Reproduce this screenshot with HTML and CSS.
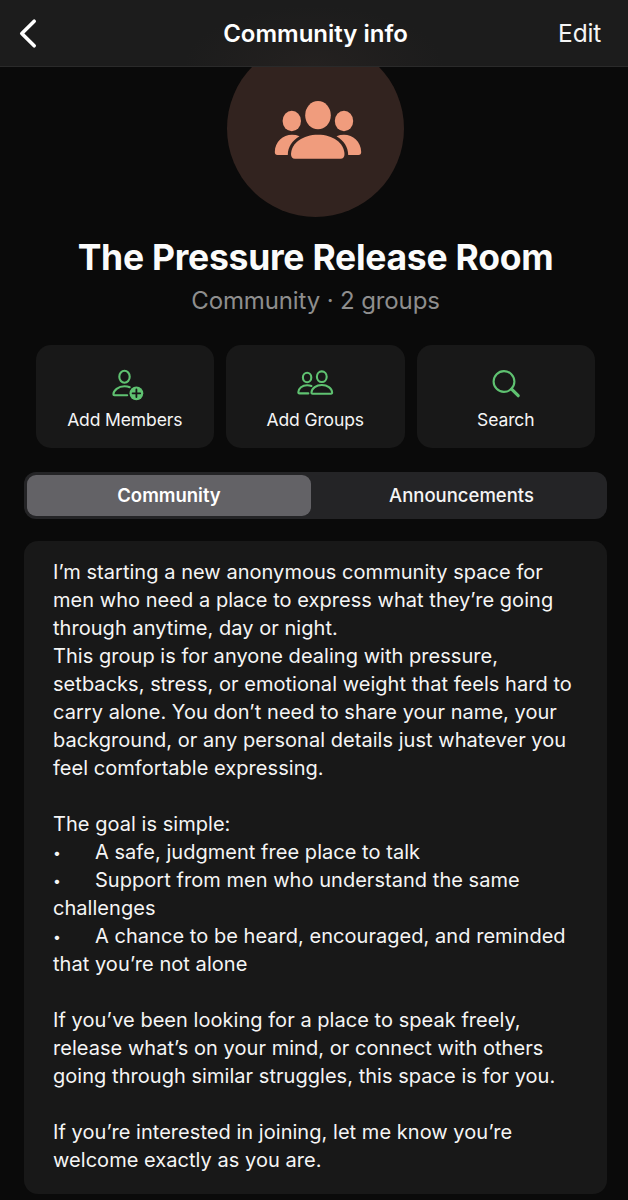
FILE: index.html
```html
<!DOCTYPE html>
<html lang="en">
<head>
  <meta charset="UTF-8" />
  <meta name="viewport" content="width=device-width, initial-scale=1.0"/>
  <title>Community info</title>
  <link rel="stylesheet" href="styles.css">
</head>
<body>

  <header class="navbar">
    <button class="back" aria-label="Back">
      <svg width="20" height="32" viewBox="0 0 20 32"><path d="M17.2 4.2 L4.8 16.5 L17.2 28.8" /></svg>
    </button>
    <h1 class="nav-title">Community info</h1>
    <button class="edit">Edit</button>
  </header>

  <main>
    <section class="profile">
      <div class="avatar">
        <svg width="88" height="58" viewBox="0 0 88 58">
          <ellipse cx="44" cy="14.2" rx="12.8" ry="14.1" />
          <ellipse cx="17.8" cy="20" rx="9.2" ry="10.2" />
          <ellipse cx="70" cy="20" rx="9.2" ry="10.2" />
          <path d="M21 57.7 Q17 57.7 17 53 C17.5 42 29 33.8 44 33.8 C59 33.8 70 42 70.5 53 Q70.5 57.7 66.5 57.7 Z" />
          <path d="M13.8 54 H3.5 Q0.8 54 0.8 51 C1 41 9 33.8 18 33.8 Q22 33.8 25.5 35.2 C18 39.5 14 46 13.8 54 Z" />
          <path d="M74.2 54 H84.5 Q87.2 54 87.2 51 C87 41 79 33.8 70 33.8 Q66 33.8 62.5 35.2 C70 39.5 74 46 74.2 54 Z" />
        </svg>
      </div>
      <h2 class="name">The Pressure Release Room</h2>
      <p class="meta">Community · 2 groups</p>
    </section>

    <section class="actions">
      <button class="action">
        <svg width="34" height="34" viewBox="-3.2 -1.3 34 34">
          <ellipse cx="13.3" cy="8.5" rx="5.2" ry="6" />
          <path d="M18.5 18.9 Q16.3 18 13.3 18 C7 18 2.3 22 2.2 26 Q2.2 27 3.2 27 H16" />
          <circle class="solid" cx="25.2" cy="25" r="6.9" />
          <path class="plus" d="M25.2 21.2 V28.8 M21.4 25 H29" />
        </svg>
        <span>Add Members</span>
      </button>
      <button class="action">
        <svg width="38" height="34" viewBox="0.2 -1 38 34">
          <ellipse cx="11.3" cy="9.5" rx="4.2" ry="4.7" />
          <ellipse cx="26" cy="8.7" rx="4.9" ry="5.3" />
          <path d="M15.6 18 Q13.8 17.2 11.3 17.2 C6.5 17.2 2.6 20.2 2.5 24.2 Q2.5 25.4 3.7 25.4 H12.5" />
          <path d="M16.8 25.7 Q15.6 25.7 15.7 24.3 C16 20 20.5 17 26 17 C31.5 17 36 20 36.3 24.3 Q36.4 25.7 35.2 25.7 Z" />
        </svg>
        <span>Add Groups</span>
      </button>
      <button class="action">
        <svg width="34" height="34" viewBox="0 -0.5 34 34">
          <circle cx="15" cy="14" r="10.4" />
          <path class="handle" d="M22.6 21.7 L29.2 28.2" />
        </svg>
        <span>Search</span>
      </button>
    </section>

    <nav class="tabs">
      <button class="tab active">Community</button>
      <button class="tab">Announcements</button>
    </nav>

    <section class="description">
      <p>I’m starting a new anonymous community space for<br>men who need a place to express what they’re going<br>through anytime, day or night.<br>This group is for anyone dealing with pressure,<br>setbacks, stress, or emotional weight that feels hard to<br>carry alone. You don’t need to share your name, your<br>background, or any personal details just whatever you<br>feel comfortable expressing.</p>
      <p>The goal is simple:<br><span class="bullet">•</span>A safe, judgment free place to talk<br><span class="bullet">•</span>Support from men who understand the same<br>challenges<br><span class="bullet">•</span>A chance to be heard, encouraged, and reminded<br>that you’re not alone</p>
      <p>If you’ve been looking for a place to speak freely,<br>release what’s on your mind, or connect with others<br>going through similar struggles, this space is for you.</p>
      <p>If you’re interested in joining, let me know you’re<br>welcome exactly as you are.</p>
    </section>
  </main>

</body>
</html>
```
FILE: styles.css
```css
* {
  box-sizing: border-box;
}

body {
  margin: 0;
  height: 1200px;
  overflow: hidden;
  background: #0a0a0a;
  color: #f5f5f5;
  font-family: Inter, "Liberation Sans", sans-serif;
}

h1, h2, p {
  margin: 0;
}

button {
  padding: 0;
  border: none;
  background: none;
  color: inherit;
  font-family: inherit;
  cursor: pointer;
}

.navbar {
  position: relative;
  z-index: 1;
  display: grid;
  grid-template-columns: 100px 1fr 100px;
  align-items: center;
  height: 67px;
  background: radial-gradient(ellipse 130px 60px at 50% 100%, #242120, #1c1c1c);
  border-bottom: 1px solid #2a2a2a;
}

.back {
  display: flex;
  padding-left: 17px;
}

.back svg {
  fill: none;
  stroke: #fff;
  stroke-width: 3.6;
  stroke-linecap: round;
  stroke-linejoin: round;
}

.nav-title {
  padding-left: 3px;
  color: #fff;
  font-size: 24px;
  font-weight: 600;
  text-align: center;
}

.edit {
  padding-right: 27px;
  font-size: 24.5px;
  letter-spacing: -0.2px;
  text-align: right;
}

.profile {
  display: flex;
  flex-direction: column;
  align-items: center;
  margin-top: -27px;
  padding-left: 3px;
}

.avatar {
  display: flex;
  justify-content: center;
  width: 177px;
  height: 177px;
  padding: 61px 0 0 4px;
  border-radius: 50%;
  background: #32231f;
}

.avatar svg {
  fill: #f09c7d;
}

.name {
  margin-top: 19px;
  color: #fbfbfb;
  font-size: 35.5px;
  font-weight: 700;
  letter-spacing: -0.26px;
  line-height: 44px;
  white-space: nowrap;
}

.meta {
  margin-top: 6px;
  color: #8e8e8e;
  font-size: 24px;
  letter-spacing: -0.13px;
  line-height: 30px;
}

.actions {
  display: grid;
  grid-template-columns: repeat(3, 1fr);
  gap: 12px;
  margin: 29px 33px 0 35.5px;
}

.action {
  display: flex;
  flex-direction: column;
  align-items: center;
  height: 103px;
  padding-top: 22px;
  border-radius: 15px;
  background: #181818;
  font-size: 17.5px;
  letter-spacing: -0.12px;
  line-height: 22px;
}

.action span {
  margin-top: 8px;
}

.action svg {
  overflow: visible;
  fill: none;
  stroke: #5fc271;
  stroke-width: 2.1;
  stroke-linecap: round;
  stroke-linejoin: round;
}

.action .solid {
  fill: #5fc271;
  stroke: none;
}

.action .plus {
  stroke: #181818;
  stroke-width: 1.8;
}

.action .handle {
  stroke-width: 3.2;
}

.tabs {
  display: grid;
  grid-template-columns: 284px 1fr;
  height: 47px;
  margin: 24px 21px 0 24px;
  padding: 3px;
  border-radius: 12px;
  background: #242426;
}

.tab {
  padding: 0 0 1px 8px;
  border-radius: 9px;
  font-size: 18.5px;
  font-weight: 500;
}

.tab.active {
  padding-left: 0;
  background: #636266;
  color: #fff;
  font-weight: 600;
}

.description {
  height: 653px;
  margin: 22px 21px 0 24px;
  padding: 17px 0 0 29px;
  border-radius: 14px;
  background: #181818;
  font-size: 20px;
  letter-spacing: 0.04px;
  line-height: 28px;
  white-space: nowrap;
}

.description p + p {
  margin-top: 28px;
}

.bullet {
  display: inline-block;
  width: 42px;
  font-size: 14px;
  line-height: 1;
  vertical-align: 1px;
}
```
